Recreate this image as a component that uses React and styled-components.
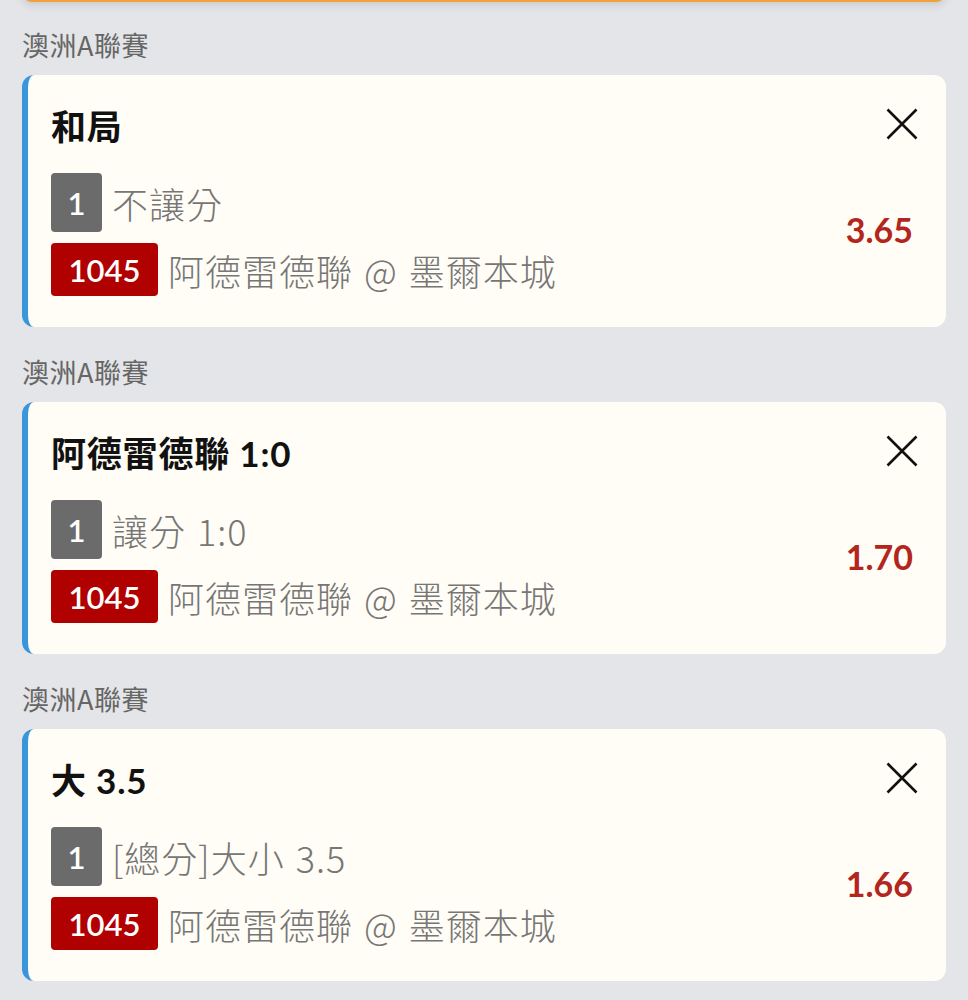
import React from "react";
import styled, { createGlobalStyle } from "styled-components";

const GlobalStyle = createGlobalStyle`
  html, body {
    margin: 0;
    padding: 0;
    background-color: #e4e5e8;
  }
  body {
    font-family: Lato, "Noto Sans CJK TC", "Noto Sans", sans-serif;
    overflow: hidden;
  }
`;

const Page = styled.div`
  display: flex;
  flex-direction: column;
  padding: 0 22px 40px;
`;

const PrevCard = styled.div`
  height: 40px;
  margin-top: -40px;
  margin-bottom: -2px;
  background-color: #fffdf5;
  border-bottom: 2px solid #f2a03c;
  border-radius: 0 0 10px 10px;
  box-shadow: 0 3px 8px rgba(0, 0, 0, 0.12);
`;

const Section = styled.section`
  display: flex;
  flex-direction: column;
  margin-top: 30px;
`;

const League = styled.div`
  height: 30px;
  line-height: 30px;
  margin-bottom: 15px;
  font-family: "Noto Sans CJK TC", sans-serif;
  font-size: 27px;
  letter-spacing: 0.5px;
  color: #666;
`;

const Card = styled.div`
  display: flex;
  flex-direction: column;
  height: 252px;
  box-sizing: border-box;
  padding: 30px 28px 31px 23px;
  background-color: #fffdf5;
  border-left: 6px solid #3a96da;
  border-radius: 12px;
`;

const Header = styled.div`
  display: flex;
  align-items: center;
  justify-content: space-between;
  height: 42px;
`;

const Title = styled.div`
  font-size: 35px;
  font-weight: 700;
  letter-spacing: 0.8px;
  color: #111;
  line-height: 42px;
`;

const CloseButton = styled.button`
  display: flex;
  width: 32px;
  height: 32px;
  padding: 0;
  margin-top: -4px;
  border: none;
  background: none;
  cursor: pointer;
`;

const Body = styled.div`
  display: flex;
  align-items: center;
  justify-content: space-between;
  margin-top: 26px;
`;

const Lines = styled.div`
  display: flex;
  flex-direction: column;
  gap: 11px;
`;

const Line = styled.div`
  display: flex;
  align-items: center;
  gap: 10px;
`;

const Badge = styled.span`
  display: inline-flex;
  align-items: center;
  justify-content: center;
  box-sizing: border-box;
  height: ${(p) => (p.$red ? "53px" : "59px")};
  min-width: ${(p) => (p.$red ? "107px" : "51px")};
  padding: 0 ${(p) => (p.$red ? "17px" : "0")};
  border-radius: 4px;
  background-color: ${(p) => (p.$red ? "#b10000" : "#6b6b6b")};
  color: #fff;
  font-family: Lato, sans-serif;
  font-size: 31px;
  font-weight: 600;
`;

const LineText = styled.span`
  font-family: "Noto Sans CJK TC", sans-serif;
  font-size: 36px;
  font-weight: 300;
  letter-spacing: 1px;
  word-spacing: 2px;
  line-height: 1;
  color: #767676;
  white-space: nowrap;
`;

const Odds = styled.div`
  margin: 0 5px 10px 0;
  font-family: Lato, sans-serif;
  font-size: 34px;
  font-weight: 700;
  color: #b3261e;
`;

const CloseIcon = () => (
  <svg width="32" height="32" viewBox="0 0 32 32">
    <path d="M1.5 1.5 L30.5 30.5 M30.5 1.5 L1.5 30.5" stroke="#111" strokeWidth="2.6" fill="none" />
  </svg>
);

const bets = [
  { title: "和局", market: "不讓分", odds: "3.65" },
  { title: "阿德雷德聯 1:0", market: "讓分 1:0", odds: "1.70" },
  { title: "大 3.5", market: "[總分]大小 3.5", odds: "1.66" },
];

function BetCard({ bet }) {
  return (
    <Card>
      <Header>
        <Title>{bet.title}</Title>
        <CloseButton aria-label="close">
          <CloseIcon />
        </CloseButton>
      </Header>
      <Body>
        <Lines>
          <Line>
            <Badge>1</Badge>
            <LineText>{bet.market}</LineText>
          </Line>
          <Line>
            <Badge $red>1045</Badge>
            <LineText>阿德雷德聯 @ 墨爾本城</LineText>
          </Line>
        </Lines>
        <Odds>{bet.odds}</Odds>
      </Body>
    </Card>
  );
}

export default function App() {
  return (
    <>
      <GlobalStyle />
      <Page>
        <PrevCard />
        {bets.map((bet, i) => (
          <Section key={i}>
            <League>澳洲A聯賽</League>
            <BetCard bet={bet} />
          </Section>
        ))}
      </Page>
    </>
  );
}
